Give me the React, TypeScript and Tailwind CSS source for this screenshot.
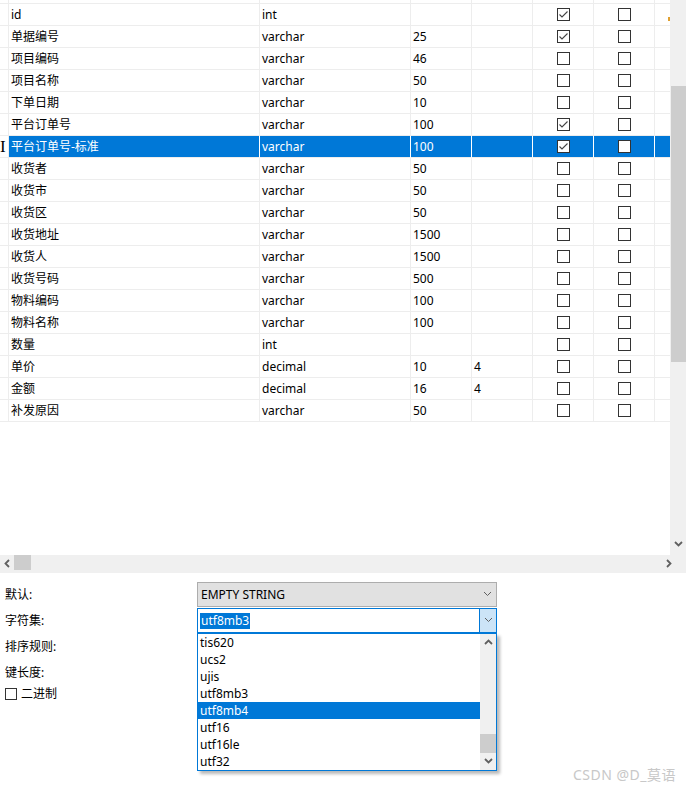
import React from "react";

type Row = { name: string; type: string; len: string; dec: string; c1: boolean; sel?: boolean; mark?: boolean };

const rows: Row[] = [
  { name: "id", type: "int", len: "", dec: "", c1: true, mark: true },
  { name: "单据编号", type: "varchar", len: "25", dec: "", c1: true },
  { name: "项目编码", type: "varchar", len: "46", dec: "", c1: false },
  { name: "项目名称", type: "varchar", len: "50", dec: "", c1: false },
  { name: "下单日期", type: "varchar", len: "10", dec: "", c1: false },
  { name: "平台订单号", type: "varchar", len: "100", dec: "", c1: true },
  { name: "平台订单号-标准", type: "varchar", len: "100", dec: "", c1: true, sel: true },
  { name: "收货者", type: "varchar", len: "50", dec: "", c1: false },
  { name: "收货市", type: "varchar", len: "50", dec: "", c1: false },
  { name: "收货区", type: "varchar", len: "50", dec: "", c1: false },
  { name: "收货地址", type: "varchar", len: "1500", dec: "", c1: false },
  { name: "收货人", type: "varchar", len: "1500", dec: "", c1: false },
  { name: "收货号码", type: "varchar", len: "500", dec: "", c1: false },
  { name: "物料编码", type: "varchar", len: "100", dec: "", c1: false },
  { name: "物料名称", type: "varchar", len: "100", dec: "", c1: false },
  { name: "数量", type: "int", len: "", dec: "", c1: false },
  { name: "单价", type: "decimal", len: "10", dec: "4", c1: false },
  { name: "金额", type: "decimal", len: "16", dec: "4", c1: false },
  { name: "补发原因", type: "varchar", len: "50", dec: "", c1: false },
];

const items = ["tis620", "ucs2", "ujis", "utf8mb3", "utf8mb4", "utf16", "utf16le", "utf32"];

function Box({ checked }: { checked: boolean }) {
  return (
    <div className="w-[13px] h-[13px] border border-[#333333] bg-white flex items-center justify-center">
      {checked && (
        <svg width="11" height="11" viewBox="0 0 11 11">
          <polyline points="1.5,5.5 4,8 9.5,2.5" fill="none" stroke="#444444" strokeWidth="1.1" />
        </svg>
      )}
    </div>
  );
}

function Chev({ dir, thin }: { dir: "up" | "down" | "left" | "right"; thin?: boolean }) {
  const pts: Record<string, string> = {
    down: "1,2 4.5,5.5 8,2",
    up: "1,6 4.5,2.5 8,6",
    left: "6,1 2.5,4.5 6,8",
    right: "3,1 6.5,4.5 3,8",
  };
  return (
    <svg width="9" height="9" viewBox="0 0 9 9">
      <polyline points={pts[dir]} fill="none" stroke="#606060" strokeWidth={thin ? 1 : 1.8} />
    </svg>
  );
}

function GridRow({ r }: { r: Row }) {
  const sel = !!r.sel;
  const base = "h-full border-b border-[#ededed] flex items-center";
  const c = sel ? "bg-[#0078d7] text-white border-r border-r-white" : "border-r border-r-[#ededed]";
  return (
    <div className="flex h-[22px]">
      <div className={`${base} w-[9px] border-r border-r-[#ededed] bg-white`}>
        {sel && (
          <span className="font-['Liberation_Serif',serif] text-[17px] text-black leading-none">I</span>
        )}
      </div>
      <div className={`${base} ${c} w-[251px] pl-[2px]`}>{r.name}</div>
      <div className={`${base} ${c} w-[151px] pl-[2px]`}>{r.type}</div>
      <div className={`${base} ${c} w-[61px] pl-[2px]`}>{r.len}</div>
      <div className={`${base} ${c} w-[61px] pl-[2px]`}>{r.dec}</div>
      <div className={`${base} ${c} w-[61px] justify-center`}>
        <Box checked={r.c1} />
      </div>
      <div className={`${base} ${c} w-[61px] justify-center`}>
        <Box checked={false} />
      </div>
      <div className={`${base} ${sel ? "bg-[#0078d7]" : ""} w-[15px] justify-end`}>
        {r.mark && <div className="w-[2px] h-[4px] bg-[#e0a030] mt-[8px]" />}
      </div>
    </div>
  );
}

export default function App() {
  return (
    <div className="w-[686px] h-[793px] bg-white flex flex-col font-['Noto_Sans','Noto_Sans_CJK_SC',sans-serif] text-[12px] text-black overflow-hidden">
      <div className="flex h-[555px]">
        <div className="w-[670px] h-full bg-white flex flex-col">
          <div className="flex h-[4px]">
            <div className="h-full w-[9px] border-r border-b border-[#ededed]" />
            <div className="h-full w-[251px] border-r border-b border-[#ededed]" />
            <div className="h-full w-[151px] border-r border-b border-[#ededed]" />
            <div className="h-full w-[61px] border-r border-b border-[#ededed]" />
            <div className="h-full w-[61px] border-r border-b border-[#ededed]" />
            <div className="h-full w-[61px] border-r border-b border-[#ededed]" />
            <div className="h-full w-[61px] border-r border-b border-[#ededed]" />
            <div className="h-full w-[15px] border-b border-[#ededed]" />
          </div>
          {rows.map((r, i) => (
            <GridRow key={i} r={r} />
          ))}
        </div>
        <div className="w-[16px] h-full bg-[#f0f0f0] flex flex-col">
          <div className="h-[86px]" />
          <div className="h-[276px] ml-[1px] bg-[#cdcdcd]" />
          <div className="flex-1" />
          <div className="h-[20px] flex items-center justify-center pb-[1px]">
            <Chev dir="down" />
          </div>
        </div>
      </div>
      <div className="h-[18px] bg-[#f0f0f0] flex">
        <div className="w-[14px] flex items-center justify-center pb-[2px]">
          <Chev dir="left" />
        </div>
        <div className="w-[17px] h-[15px] bg-[#cdcdcd]" />
        <div className="flex-1" />
        <div className="w-[17px] flex items-center justify-center pb-[2px]">
          <Chev dir="right" />
        </div>
        <div className="w-[9px]" />
      </div>
      <div className="relative flex-1 flex flex-col pt-[9px] gap-[1px]">
        <div className="flex h-[25px] items-center">
          <div className="w-[197px] pl-[5px]">默认:</div>
          <div className="w-[300px] h-full bg-[#e1e1e1] border border-[#adadad] flex items-center pl-[3px]">
            <span className="flex-1">EMPTY STRING</span>
            <div className="w-[17px] flex items-center justify-center">
              <Chev dir="down" thin />
            </div>
          </div>
        </div>
        <div className="flex h-[25px] items-center">
          <div className="w-[197px] pl-[5px]">字符集:</div>
          <div className="w-[300px] h-full bg-white border border-[#0078d7] flex items-center">
            <div className="flex-1 pl-[2px]">
              <span className="bg-[#0078d7] text-white px-[1px] leading-[16px] inline-block">utf8mb3</span>
            </div>
            <div className="w-[17px] h-full bg-[#cce4f7] border-l border-[#0078d7] flex items-center justify-center">
              <Chev dir="down" thin />
            </div>
          </div>
        </div>
        <div className="flex h-[25px] items-center">
          <div className="w-[197px] pl-[5px]">排序规则:</div>
        </div>
        <div className="flex h-[25px] items-center">
          <div className="w-[197px] pl-[5px]">键长度:</div>
        </div>
        <div className="flex h-[16px] items-center pl-[5px] gap-[4px]">
          <div className="w-[12px] h-[12px] border border-[#333333] bg-white" />
          <span>二进制</span>
        </div>

        <div className="absolute left-[197px] top-[60px] w-[300px] h-[138px] bg-white border border-[#0078d7] shadow-[3px_3px_3px_rgba(0,0,0,0.28)] flex">
          <div className="flex-1 flex flex-col">
            {items.map((it) => (
              <div
                key={it}
                className={`h-[17px] flex items-center pl-[2px] ${it === "utf8mb4" ? "bg-[#0078d7] text-white" : ""}`}
              >
                {it}
              </div>
            ))}
          </div>
          <div className="w-[16px] h-full bg-[#f0f0f0] flex flex-col">
            <div className="h-[17px] flex items-center justify-center">
              <Chev dir="up" />
            </div>
            <div className="h-[83px]" />
            <div className="h-[19px] bg-[#cdcdcd]" />
            <div className="flex-1 flex items-center justify-center">
              <Chev dir="down" />
            </div>
          </div>
        </div>

        <div className="absolute right-[10px] bottom-[8px] text-[14px] text-[#c8c8c8] tracking-[0.5px]">
          CSDN @D_莫语
        </div>
      </div>
    </div>
  );
}
